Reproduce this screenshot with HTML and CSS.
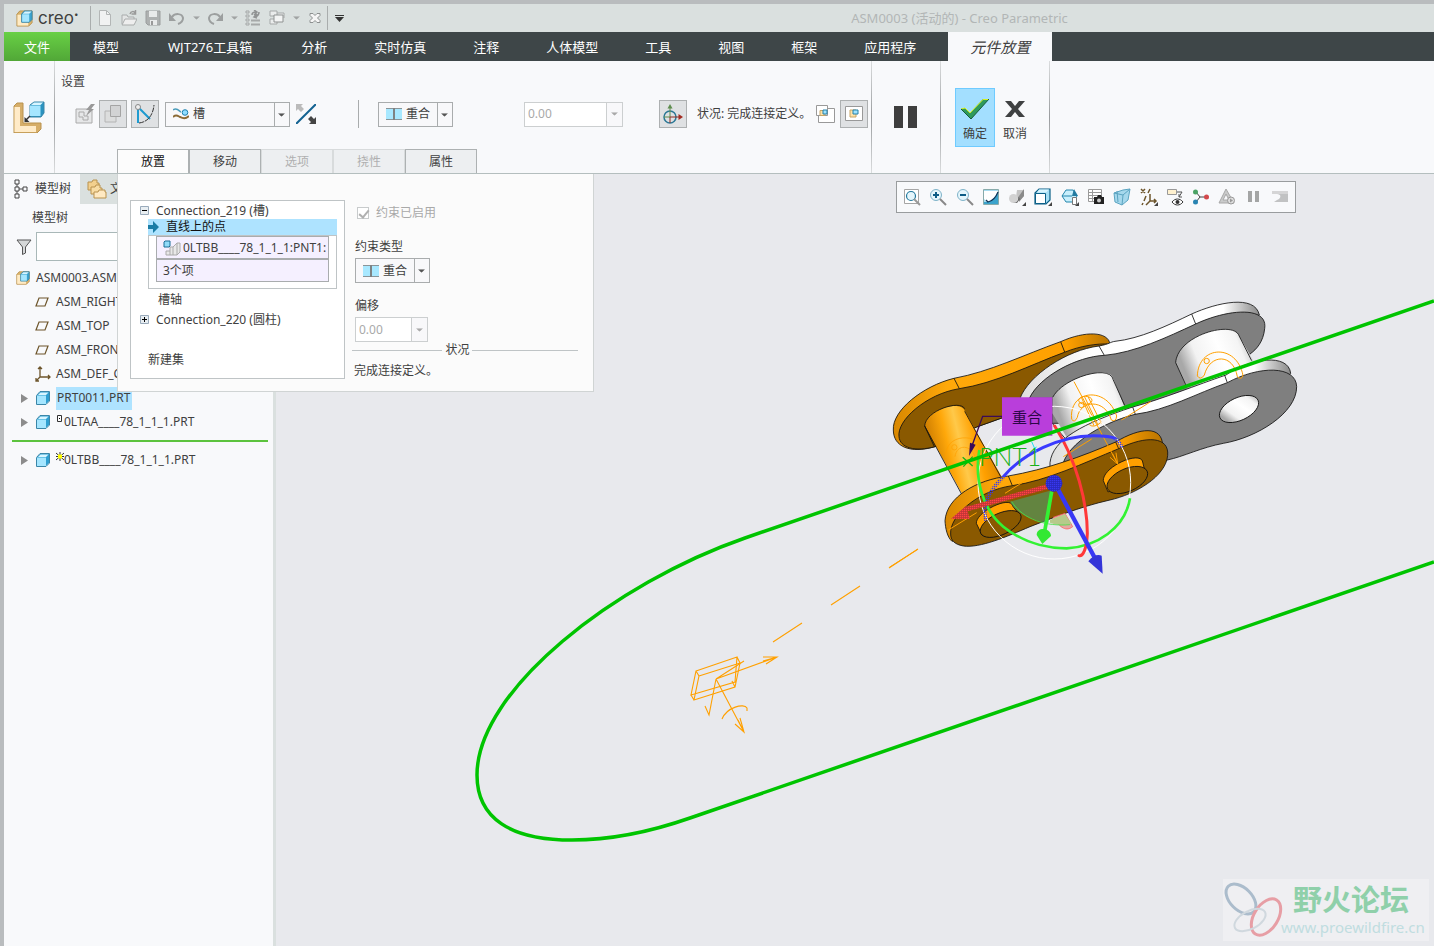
FILE: index.html
```html
<!DOCTYPE html>
<html lang="zh-CN">

<head>
    <meta charset="UTF-8">
    <meta name="viewport" content="width=device-width, initial-scale=1.0">
    <title>ASM0003 (活动的) - Creo Parametric</title>
    <link rel="stylesheet" href="styles.css">
</head>

<body>

    <!-- shared icons -->
    <svg class="defs" aria-hidden="true">
        <symbol id="caret" viewBox="0 0 8 4"><path d="M0 0h8L4 4z" fill="currentColor"/></symbol>
        <symbol id="part" viewBox="0 0 14 14">
            <path d="M1 4l3-3h9v9l-3 3H1z" fill="#2f9fd0"/>
            <path d="M1 4.500h9V13H1z" fill="#a5e6ff"/>
            <path d="M2 4l2.500-2.500h8L10 4z" fill="#d8f5ff"/>
            <path d="M.5 4.500L4 .5h9.500v9.500l-3.500 3.500H.5z" fill="none" stroke="#3a86a8"/>
        </symbol>
        <symbol id="asm" viewBox="0 0 18 18">
            <path d="M1 4.500L4 1h13v12.500L13.500 17H1z" fill="#d9b36c" stroke="#b9924e"/>
            <path d="M1.500 5h11.500v11.500H1.500z" fill="#ffebc4"/>
            <path d="M6 4l3-3h8v9l-3 3H6z" fill="#3aa3cf" stroke="#3a86a8"/>
            <path d="M6.500 4.500H14V12.500H6.500z" fill="#a5e6ff"/>
            <path d="M7 4l2.500-2.500h7L14 4z" fill="#d8f5ff"/>
        </symbol>
        <symbol id="plane" viewBox="0 0 14 10"><path d="M4 1h9l-3 8H1z" fill="none" stroke="#6d552b" stroke-width="1.200"/></symbol>
        <symbol id="arrow" viewBox="0 0 7 9"><path d="M0 0l7 4.500L0 9z" fill="#8c8c8c"/></symbol>
        <symbol id="coincident" viewBox="0 0 16 12">
            <path d="M0 0h16v12H0z" fill="#a8e8ff"/>
            <path d="M0 .5h16M0 11.500h16" stroke="#8a9498"/>
            <path d="M8 0v12" stroke="#7e8283" stroke-width="2"/>
        </symbol>
    </svg>

    <header class="titlebar">
        <svg class="logo-icon" viewBox="0 0 18 18"><use href="#asm"/></svg>
        <span class="logo">creo<sup>•</sup></span>
        <div class="quick">
            <button aria-label="新建"><svg viewBox="0 0 16 16"><path d="M2.500.5h7l4 4v11h-11z" fill="#f1f2f2" stroke="#b3b6b6"/><path d="M9.500.5v4h4" fill="none" stroke="#b3b6b6"/></svg></button>
            <button aria-label="打开"><svg viewBox="0 0 16 16"><path d="M1 14V5h5l1 2h6v2" fill="#e3e5e5" stroke="#a9acac"/><path d="M1 15l3-6h12l-3 6z" fill="#eee" stroke="#a9acac"/><path d="M9 4c1-3 4-3 5-1M14.500 0v4h-4" fill="none" stroke="#999" stroke-width="1.500"/></svg></button>
            <button aria-label="保存"><svg viewBox="0 0 16 16"><path d="M1 1h14v14H3l-2-2z" fill="#aeb1b1" stroke="#9b9e9e"/><path d="M4 1h8v6H4zM5 10h7v5H5z" fill="#e8eaea"/><path d="M6 11h2v4H6z" fill="#999"/></svg></button>
            <button aria-label="撤消"><svg viewBox="0 0 16 16"><path d="M3 7c3-4 10-4 11 1 0 3-2 5-5 6" fill="none" stroke="#9c9f9f" stroke-width="2"/><path d="M0 3v8h7z" fill="#9c9f9f"/></svg></button>
            <button class="drop" aria-label="撤消列表"><svg viewBox="0 0 8 4"><use href="#caret"/></svg></button>
            <button aria-label="重做"><svg viewBox="0 0 16 16"><path d="M13 7C10 3 3 3 2 8c0 3 2 5 5 6" fill="none" stroke="#9c9f9f" stroke-width="2"/><path d="M16 3v8H9z" fill="#9c9f9f"/></svg></button>
            <button class="drop" aria-label="重做列表"><svg viewBox="0 0 8 4"><use href="#caret"/></svg></button>
            <button aria-label="重新生成"><svg viewBox="0 0 16 16"><path d="M1 1h3v2H1zM1 5h3v2H1zM1 9h3v2H1zM1 13h3v2H1z" fill="none" stroke="#a5a8a8"/><path d="M6 10.500h9M6 14.500h9" stroke="#a5a8a8" stroke-width="2"/><path d="M7 5c0-3 3-3 4-3M14 2c0 4-2 4-4 5M9 0l3 2-3 3M12 4l-3 3 3 1" fill="none" stroke="#909393" stroke-width="1.500"/></svg></button>
            <button aria-label="窗口"><svg viewBox="0 0 16 16"><path d="M1 1h7v5H1zM8 3h7v5M1 9h7v5H1z" fill="#eaecec" stroke="#a5a8a8"/><path d="M5 5h9v7H5z" fill="#f3f4f4" stroke="#8f9292"/></svg></button>
            <button class="drop" aria-label="窗口列表"><svg viewBox="0 0 8 4"><use href="#caret"/></svg></button>
            <button aria-label="关闭"><svg viewBox="0 0 16 16"><path d="M3 3.500h3l2 2 2-2h3v2L10.500 8l2.500 2.500v2h-3l-2-2-2 2H3v-2L5.500 8 3 5.500z" fill="#f6f6f6" stroke="#8d9090"/></svg></button>
        </div>
        <button class="customize" aria-label="自定义快速访问工具栏"><svg viewBox="0 0 9 7"><path d="M0 .5h9" stroke="#333"/><path d="M0 2h9L4.500 7z" fill="#333"/></svg></button>
        <h1>ASM0003 (活动的) - Creo Parametric</h1>
    </header>

    <nav class="menu">
        <button class="file">文件</button>
        <button>模型</button>
        <button class="toolbox">WJT276工具箱</button>
        <button>分析</button>
        <button>实时仿真</button>
        <button>注释</button>
        <button>人体模型</button>
        <button>工具</button>
        <button>视图</button>
        <button>框架</button>
        <button>应用程序</button>
        <button class="current">元件放置</button>
    </nav>

    <section class="ribbon">
        <div class="component">
            <svg viewBox="0 0 32 32">
                <path d="M1 5l3-3h6v20h18v6l-4 4H1z" fill="#d6ae69" stroke="#b9924e"/>
                <path d="M1.500 6H7v19h16v6H1.500z" fill="#ffebc8"/>
                <path d="M17 4l4-3h10v11l-3 4H17z" fill="#2b93c0" stroke="#3a86a8"/>
                <path d="M17 4.500h10.500V15H17z" fill="#a5e6ff"/><path d="M18 4l3-2.500h9L27.500 4z" fill="#d8f5ff"/>
                <path d="M17 15l-4 4" stroke="#333" stroke-width="1.500"/><path d="M11.500 16v5h5z" fill="#333"/>
            </svg>
        </div>

        <div class="settings">
            <span class="group-title">设置</span>
            <div class="controls">
                <button class="tool" aria-label="自动放置"><svg viewBox="0 0 20 20"><path d="M1 5h16v14H1z" fill="#e6e7e8" stroke="#aaa"/><path d="M4 8h5v4h4v4H8v-3H4z" fill="none" stroke="#aaa"/><path d="M16 0h4l-4 5h3l-8 7 3-6h-3z" fill="#999"/></svg></button>
                <button class="tool on" aria-label="界面放置"><svg viewBox="0 0 20 20"><path d="M2 7h11v11H2z" fill="#dcdddd" stroke="#b4b4b4"/><path d="M7.500 1.500h10v11h-10z" fill="#d2d3d4" stroke="#a4a4a4"/></svg></button>
                <button class="tool on gap" aria-label="手动放置"><svg viewBox="0 0 20 20"><path d="M3 4v15M3 3l12 12" stroke="#1e9bd0" stroke-width="2"/><path d="M4 19c9-1 14-8 15-18" fill="none" stroke="#333" stroke-dasharray="5 1"/><circle cx="3" cy="3" r="2.500" fill="#eee" stroke="#888"/></svg></button>
                <div class="combo slot">
                    <svg class="combo-icon" viewBox="0 0 16 12"><path d="M0 2c4-3 6 1 8 2" fill="none" stroke="#4b9cbb" stroke-width="1.500"/><path d="M0 9c3-3 5-1 7 0s5 3 9-1" fill="none" stroke="#8b6a35" stroke-width="2"/><circle cx="12" cy="4.500" r="2.800" fill="#8fdcff" stroke="#1b7fae"/></svg>
                    <select aria-label="连接类型"><option>槽</option><option>刚性</option><option>销</option><option>圆柱</option></select>
                    <svg class="caret" viewBox="0 0 8 4"><use href="#caret"/></svg>
                </div>
                <button class="flip" aria-label="反向"><svg viewBox="0 0 20 20"><path d="M0 20L20 0" stroke="#146291" stroke-width="2"/><path d="M0 0h7L5 2l3 3-3 3-3-3-2 2z" fill="#bbb"/><path d="M20 20h-7l2-2-3-3 3-3 3 3 2-2z" fill="#444"/></svg></button>
                <div class="combo constraint ribbon-constraint">
                    <svg class="combo-icon" viewBox="0 0 16 12"><use href="#coincident"/></svg>
                    <select aria-label="约束类型"><option>重合</option><option>距离</option><option>平行</option></select>
                    <svg class="caret" viewBox="0 0 8 4"><use href="#caret"/></svg>
                </div>
                <div class="offset ribbon-offset">
                    <input type="text" value="0.00" aria-label="偏移" disabled>
                    <button aria-label="偏移列表" disabled><svg viewBox="0 0 8 4"><use href="#caret"/></svg></button>
                </div>
                <button class="tool on" aria-label="3D 拖动器"><svg viewBox="0 0 20 20"><circle cx="7" cy="13" r="6" fill="none" stroke="#2b7896" stroke-width="1.500"/><path d="M7 4v9M1 13h6" stroke="#5d8d4e"/><path d="M7 13v6M7 13h10" stroke="#8d2c22"/><path d="M4.500 4.500L7 0l2.500 4.500z" fill="#5d8d4e"/><path d="M15.500 10l4.500 3-4.500 3z" fill="#a22b21"/></svg></button>
                <span class="state">状况: 完成连接定义。</span>
                <button class="tool" aria-label="单独窗口"><svg viewBox="0 0 20 20"><path d="M2.500 4.500h16v14h-16z" fill="#fff" stroke="#999"/><path d="M.5 1.500h11v10H.5z" fill="#fff" stroke="#999"/><path d="M4 6.500h5v5H4z" fill="#ffe2a8" stroke="#c8a564"/><path d="M7 6h4v4H7z" fill="#9fe3ff" stroke="#2781a8"/></svg></button>
                <button class="tool on" aria-label="主窗口"><svg viewBox="0 0 20 20"><path d="M1.500 2.500h17v14h-17z" fill="#fff" stroke="#999"/><path d="M6 6h6v7H6z" fill="#ffe2a8" stroke="#c8a564"/><path d="M9 6h5v4H9z" fill="#9fe3ff" stroke="#2781a8"/></svg></button>
            </div>
            <div class="tabs">
                <button class="open">放置</button>
                <button>移动</button>
                <button disabled>选项</button>
                <button disabled>挠性</button>
                <button>属性</button>
            </div>
        </div>

        <div class="pause">
            <button aria-label="暂停"><svg viewBox="0 0 24 22"><path d="M0 0h9v22H0zM14 0h9v22h-9z" fill="#3e3e3e"/></svg></button>
        </div>
        <div class="finish">
            <button class="ok"><svg viewBox="0 0 28 20"><path d="M0 10l4-1 5 5L22 0h6L10 20z" fill="#2f9a5c"/><path d="M0 10l4-1 5 5L22 .5h6" fill="none" stroke="#d6f01a"/><path d="M28 0L10 20 0 10" fill="none" stroke="#175c3a"/></svg>确定</button>
            <button><svg viewBox="0 0 28 20"><path d="M4 2h6l4 5 4-5h6l-7 8 7 8h-6l-4-5-4 5H4l7-8z" fill="#3f4142"/></svg>取消</button>
        </div>
    </section>

    <main class="workspace">
        <aside class="sidebar">
            <div class="side-tabs">
                <button class="current"><svg viewBox="0 0 14 20"><path d="M1 1h4v4H1zM1 8h4v4H1zM1 15h4v4H1zM9 8h4v4H9zM3 5v3M3 12v3M5 10h4" fill="none" stroke="#444"/></svg>模型树</button>
                <button class="folders"><svg viewBox="0 0 20 20"><path d="M1 3h4l1-2h4v3h2v7H1z" fill="#f3d08e" stroke="#b9924e"/><path d="M4 8h4l1-2h4v3h2v6H4z" fill="#f8dca4" stroke="#b9924e"/><path d="M7 13h4l1-2h6v2h1v6H7z" fill="#ffe9c2" stroke="#b9924e"/></svg>文件夹浏览器</button>
            </div>
            <h2>模型树</h2>
            <div class="filter">
                <svg viewBox="0 0 16 16"><path d="M1 1h14L9.500 8v6L6.500 15.500V8z" fill="#d5d7d8" stroke="#555"/></svg>
                <input type="text" aria-label="筛选">
            </div>
            <ul class="tree">
                <li class="root"><svg class="ic" viewBox="0 0 18 18"><use href="#asm"/></svg>ASM0003.ASM</li>
                <li class="datum"><svg class="flat" viewBox="0 0 14 10"><use href="#plane"/></svg>ASM_RIGHT</li>
                <li class="datum"><svg class="flat" viewBox="0 0 14 10"><use href="#plane"/></svg>ASM_TOP</li>
                <li class="datum"><svg class="flat" viewBox="0 0 14 10"><use href="#plane"/></svg>ASM_FRONT</li>
                <li class="datum"><svg class="ic" viewBox="0 0 16 16"><path d="M5 1v10h10M5 11l-4 4M3 3l2-2 2 2M13 9l2 2-2 2M1 12v3h3" fill="none" stroke="#6d552b" stroke-width="1.300"/></svg>ASM_DEF_CSYS</li>
                <li><svg class="exp" viewBox="0 0 7 9"><use href="#arrow"/></svg><svg class="ic" viewBox="0 0 14 14"><use href="#part"/></svg><span class="picked">PRT0011.PRT</span></li>
                <li><svg class="exp" viewBox="0 0 7 9"><use href="#arrow"/></svg><svg class="ic" viewBox="0 0 14 14"><use href="#part"/></svg><svg class="mark" viewBox="0 0 8 16"><path d="M1.500 1.500h4v6h-4z" fill="#fff" stroke="#333"/><path d="M3 4h1v1H3z"/></svg>0LTAA____78_1_1_1.PRT</li>
                <li class="insert" aria-label="插入点"></li>
                <li><svg class="exp" viewBox="0 0 7 9"><use href="#arrow"/></svg><svg class="ic" viewBox="0 0 14 14"><use href="#part"/></svg><svg class="mark" viewBox="0 0 8 16"><path d="M0 1l8 7M8 1L0 8M4 0v9M0 4.500h8" stroke="#333"/><path d="M2 2.500h4v4H2z" fill="#ff0"/></svg>0LTBB____78_1_1_1.PRT</li>
            </ul>
        </aside>

        <div class="viewport">
            <svg class="scene" viewBox="276 174 1158 772" preserveAspectRatio="xMinYMin slice">
                <defs>
                    <linearGradient id="pin" x1="0" y1="0.300" x2="1" y2="0">
                        <stop offset="0" stop-color="#c87800"/><stop offset=".25" stop-color="#ffa80a"/>
                        <stop offset=".4" stop-color="#ffc94a"/><stop offset=".6" stop-color="#ffa000"/><stop offset="1" stop-color="#b87000"/>
                    </linearGradient>
                    <linearGradient id="roller" x1="0" y1=".3" x2="1" y2="0">
                        <stop offset="0" stop-color="#a8a8a8"/><stop offset=".2" stop-color="#f2f2f2"/>
                        <stop offset=".5" stop-color="#fff"/><stop offset=".75" stop-color="#f4f4f4"/><stop offset="1" stop-color="#a0a0a0"/>
                    </linearGradient>
                    <linearGradient id="rim"><stop offset="0" stop-color="#ddd"/><stop offset=".3" stop-color="#fff"/><stop offset=".85" stop-color="#fff"/><stop offset="1" stop-color="#888"/></linearGradient>
                    <linearGradient id="orange"><stop offset="0" stop-color="#d88700"/><stop offset=".25" stop-color="#ffa90a"/><stop offset=".8" stop-color="#ffa000"/><stop offset="1" stop-color="#b87400"/></linearGradient>
                    <pattern id="blue-dots" width="6" height="6" patternUnits="userSpaceOnUse"><path d="M0 0h4v4H0z" fill="#3838f0"/></pattern>
                    <pattern id="red-dots" width="6" height="6" patternUnits="userSpaceOnUse"><path d="M0 0h6v6H0z" fill="#b33"/><path d="M0 0h4v4H0z" fill="#ff4444"/></pattern>
                </defs>

                <!-- chain link assembly, drawn at 3x -->
                <g transform="translate(880 290) scale(.33333)" stroke="#111" stroke-width="2.500" fill="none">
                    <!-- rear outer plate -->
                    <path d="M40 420C36 362 128 288 222 265C330 245 430 195 542 155C616 122 684 124 690 162L600 300L290 411L165 470C90 492 40 470 40 420z" fill="url(#orange)"/>
                    <path d="M57 440C50 392 138 312 238 296C345 280 450 225 553 187C600 168 650 160 690 162L600 300L290 411L165 470C105 486 60 474 57 440z" fill="#8a5900"/>
                    <path d="M222 265l16 31M542 155l12 31"/>
                    <!-- pin -->
                    <path d="M134 408C136 362 240 328 254 362L366 562L262 640z" fill="url(#pin)" stroke="none"/>
                    <path d="M163 470L134 408C136 362 240 328 254 356M134 408L250 622M254 364L362 560"/>

                    <!-- rear inner plate -->
                    <path d="M420 325C446 256 560 180 657 168C690 162 690 156 705 154C780 146 860 108 935 72C1010 38 1125 12 1138 75L1100 110L520 330z" fill="url(#rim)"/>
                    <path d="M448 325C480 258 590 200 673 196C765 188 860 142 947 102C1040 58 1165 46 1154 116C1150 155 1130 178 1110 192L1040 290L765 372L560 400L516 400V325z" fill="#7f7f7f"/>
                    <path d="M657 168l16 28M935 72l12 30"/>
                    <!-- rollers -->
                    <path d="M518 322C550 262 690 222 700 266L745 380L565 450L517 370z" fill="url(#roller)" stroke="none"/>
                    <path d="M518 322C550 262 690 222 699 268M699 268L734 346M517 400L556 446"/>
                    <path d="M887 218C892 135 1060 90 1077 137L1122 215L1040 290L920 295z" fill="url(#roller)" stroke="none"/>
                    <path d="M918 286L887 218C892 135 1060 90 1077 137M1077 137L1115 212"/>
                    <!-- front inner plate -->
                    <path d="M510 518C518 448 610 400 758 351C850 326 950 285 1038 255C1110 205 1225 188 1232 250L1200 290L700 560H510z" fill="url(#rim)"/>
                    <path d="M545 545C545 470 660 400 765 373C860 361 950 310 1042 278C1138 226 1248 226 1250 290C1250 370 1130 443 1030 460C965 472 910 500 862 510L700 560z" fill="#7f7f7f"/>
                    <path d="M758 351l8 22M1034 256l8 22"/>
                    <ellipse cx="1077" cy="357" rx="63" ry="34" transform="rotate(-25 1077 357)" fill="url(#roller)"/>

                    <!-- front outer plate -->
                    <path d="M195 692C200 620 290 570 385 558C500 538 605 500 707 456C780 412 846 406 848 466L400 690L216 754C202 742 196 715 195 692z" fill="url(#orange)"/>
                    <path d="M212 732C208 680 290 602 397 587C500 572 610 520 716 476C800 435 868 440 863 496C858 560 765 613 690 630C600 650 510 687 450 710C380 740 300 775 250 768C222 763 212 750 212 732z" fill="#8a5900"/>
                    <path d="M385 558l12 29M707 456l9 20"/>
                    <path d="M670 572C668 530 782 480 788 516L795 545L684 606z" fill="#ffa000"/>
                    <ellipse cx="742" cy="570" rx="65" ry="34" transform="rotate(-24 742 570)" fill="#8a5900"/>
                    <path d="M289 700C288 665 392 615 398 648L415 670L306 735z" fill="#ffa000"/>
                    <ellipse cx="362" cy="702" rx="66" ry="32" transform="rotate(-25 362 702)" fill="#8a5900"/>

                    <!-- section quadrant -->
                    <path d="M390 635L518 600L505 700C450 690 410 670 390 635z" fill="#4f9b63" opacity=".65" stroke="none"/>
                    <path d="M520 682L555 670L578 710C560 725 540 715 520 682z" fill="#e6a8a2" stroke="#ff6060"/>
                    <path d="M510 690L555 672L575 702C550 707 530 706 510 698z" fill="#b6ca8a" stroke="none"/>
                    <path d="M395 635C430 690 500 710 570 704" stroke="#49e049"/>

                    <!-- datum axis and servo symbols -->
                    <g stroke="#ffa000" stroke-width="3">
                        <path d="M28 832l85-54M205 720l85-52M375 610l85-53M550 500l85-53M725 390l87-55"/>
                        <path d="M582 275L713 522M690 502l23 20-5-34M713 522l-15-30M604 322l38 85M624 320l40 80M614 321l40 84M628 404Q642 416 664 396"/>
                        <path d="M575 388C565 300 680 285 710 378Q708 398 694 390C675 325 600 330 592 382Q584 400 575 388z"/>
                        <ellipse cx="616" cy="331" rx="20" ry="12"/><circle cx="604" cy="345" r="8"/>
                        <path d="M952 258C955 165 1070 160 1089 256Q1084 272 1072 260C1060 190 990 190 973 255Q962 272 952 258z"/>
                        <circle cx="980" cy="213" r="8"/>
                        <g opacity=".7"><path d="M198 505C190 425 300 430 315 480M225 500C230 460 275 465 285 500"/><circle cx="223" cy="472" r="8"/></g>
                    </g>

                    <!-- 3D dragger -->
                    <circle cx="523" cy="578" r="229" stroke="#fff" stroke-width="3"/>
                    <path d="M298 480C282 570 310 660 370 710C430 758 500 775 560 775C650 770 735 715 750 625" stroke="#33f233" stroke-width="8"/>
                    <path d="M524 408C590 510 622 640 622 730C620 780 608 800 597 797" stroke="#ff3838" stroke-width="9" stroke-linecap="round"/>
                    <path d="M370 560C430 490 540 437 640 437C670 437 695 439 707 446" stroke="#3a3aff" stroke-width="9"/>
                    <path d="M318 692C305 650 325 605 370 560M707 446C715 452 722 460 726 474" stroke="url(#blue-dots)" stroke-width="11"/>
                    <path d="M500 590L262 657" stroke="url(#red-dots)" stroke-width="14"/>
                    <path d="M213 686l46-39 10 40z" fill="url(#red-dots)" stroke="none"/>
                    <path d="M515 605L493 730" stroke="#33f233" stroke-width="11"/>
                    <path d="M470 735C470 710 512 712 513 738L487 762z" fill="#33e833" stroke="none"/>
                    <path d="M535 600L645 805" stroke="#3838f5" stroke-width="13"/>
                    <path d="M625 814C638 796 654 792 665 797L668 851z" fill="#3434d8" stroke="none"/>
                    <circle cx="522" cy="580" r="25" fill="#2727b8" stroke="none"/>
                    <circle cx="522" cy="580" r="25" fill="url(#blue-dots)" stroke="none"/>
                    <path d="M455 455l12 27M470 484l-9-8 9-5" stroke="#20e0f0" stroke-width="3"/>

                    <!-- coincident tag -->
                    <path d="M366 379H308L275 470" stroke="#3b0a58" stroke-width="4"/>
                    <path d="M267 498l3-40 17 6z" fill="#3b0a58" stroke="none"/>
                    <path d="M366 322h151v115H366z" fill="#b93edb" stroke="none"/>
                    <path d="M248 502l30 26M278 500l-28 30" stroke="#18b018" stroke-width="4"/>
                </g>

                <text class="tag" x="1012" y="423">重合</text>
                <text class="point" x="979" y="466">PNT1</text>

                <!-- slot curve -->
                <path d="M1434 301L745 538C615 583 477 690 477 775C477 818 510 840 572 840C610 840 650 832 690 818L1434 562" fill="none" stroke="#00c400" stroke-width="3.500"/>

                <g fill="none" stroke="#ffa000" stroke-width="1.100">
                    <path d="M889 568l29-19M831 605l29-19M773 642l29-19"/>
                    <path d="M696 671l41-14-2 25-44 13zM699 676l41-13-5 24-41 13zM696 671l3 5M737 657l3 6M732 681l3 6M691 695l3 5"/>
                    <path d="M716 679L777 657M763 657h14l-11 7M763 661l14-4M716 679l28-18M716 679l-7 36M705 706l4 9 2-10M716 679l28 53M735 724l9 8-4-14M744 732l-6-12"/>
                    <path d="M722 719C727 707 744 703 747 708v3"/>
                </g>
            </svg>

            <div class="view-tools">
                <button aria-label="重新调整"><svg viewBox="0 0 18 18"><path d="M1.500 1.500h14v14h-14z" fill="#fff" stroke="#a5a5a5"/><circle cx="8" cy="8" r="4.500" fill="#e5f6fc" stroke="#21789d" stroke-width="1.200"/><path d="M11 11l6 6" stroke="#999" stroke-width="2"/></svg></button>
                <button aria-label="放大"><svg viewBox="0 0 18 18"><circle cx="7" cy="7" r="5.500" fill="#e5f6fc" stroke="#7fb3c9"/><path d="M4 7h6M7 4v6" stroke="#0d5c86" stroke-width="2"/><path d="M11 11l6 6" stroke="#888" stroke-width="2"/></svg></button>
                <button aria-label="缩小"><svg viewBox="0 0 18 18"><circle cx="7" cy="7" r="5.500" fill="#e5f6fc" stroke="#7fb3c9"/><path d="M4 7h6" stroke="#0d5c86" stroke-width="2"/><path d="M11 11l6 6" stroke="#888" stroke-width="2"/></svg></button>
                <button aria-label="重画"><svg viewBox="0 0 18 18"><path d="M1.500 1.500h15v15h-15z" fill="#a8dcf0" stroke="#8aa"/><path d="M2 3h14C14 8 10 12 6 14l-4-3z" fill="#fff"/><path d="M2 14h4c5-2 9-6 10-10v12H2z" fill="#3ba3cc"/><path d="M16 4C14 9 11 13 6 14l-2-2" fill="none" stroke="#135" stroke-width="1.200"/></svg></button>
                <button aria-label="渲染选项"><svg viewBox="0 0 18 18"><path d="M9 2h7v6l-4 4-4-3z" fill="#c4c4c4"/><path d="M16 1v7l-5 6V8z" fill="#8a8a8a"/><circle cx="5.500" cy="10.500" r="4.500" fill="#d2d2d2"/><path d="M5 15c4 0 6-3 5-7l2 3-3 4z" fill="#666"/><path d="M18 14v4h-4z" fill="#444"/></svg></button>
                <button aria-label="显示样式"><svg viewBox="0 0 18 18"><path d="M1 5l4-4h11v11l-4 4H1z" fill="#a5dff5" stroke="#0b5f87" stroke-width="1.200"/><path d="M1.500 5.500h10v10h-10z" fill="#fff" stroke="#0b5f87"/><path d="M3 4.500l2-3h10l-3 3z" fill="#d8f5ff"/><path d="M18 14v4h-4z" fill="#444"/></svg></button>
                <button aria-label="已保存方向"><svg viewBox="0 0 18 18"><path d="M1 8l4-6h7l4 6-4 6H5zM1 8h10" fill="#c8effc" stroke="#2486ad"/><path d="M13 1l4 7h-6z" fill="#227ba1"/><path d="M11.500 9.500h4v7h-4z" fill="#fff" stroke="#777"/><path d="M18 14v4h-4z" fill="#444"/></svg></button>
                <button aria-label="视图管理器"><svg viewBox="0 0 18 18"><path d="M1.500 1.500h13v12h-13zM1 4.500h13M1 7.500h13M1 10.500h13M5.500 1v13" fill="#fff" stroke="#999"/><path d="M7 9h3l1-2h3l1 2h2v7H7z" fill="#222"/><circle cx="12" cy="12.500" r="2" fill="#ccc"/></svg></button>
                <button aria-label="透视图"><svg viewBox="0 0 18 18"><path d="M1 5l9-3 7-1-2 11-6 5-7-3z" fill="#a5d8ec" stroke="#5ba4c1"/><path d="M1 5l9 2 7-6M10 7l-1 10M4 3l1 11" fill="none" stroke="#5ba4c1"/></svg></button>
                <button aria-label="基准显示过滤器"><svg viewBox="0 0 18 18"><path d="M1 1l4 4M5 1L1 5M10 1L8 5M6 8l-2 5M3 15l-1 2M10 6v7h6M10 13l-4 4M14 11l2 2-2 2" fill="none" stroke="#6d552b" stroke-width="1.500"/><path d="M18 14v4h-4z" fill="#444"/></svg></button>
                <button aria-label="注释显示"><svg viewBox="0 0 18 18"><path d="M1.500 1.500h9v5h-9z" fill="#fff1cf" stroke="#999"/><path d="M11 4h5l-3 5M13 6v3h3" fill="none" stroke="#555"/><path d="M6 14c3-4 8-4 11 0-3 4-8 4-11 0z" fill="#fff" stroke="#333"/><circle cx="11.500" cy="14" r="2" fill="#333"/></svg></button>
                <button aria-label="旋转中心"><svg viewBox="0 0 18 18"><path d="M4 4l4 5-4 5M8 9h6" fill="none" stroke="#444"/><circle cx="3.500" cy="4" r="2.500" fill="#4ba365"/><circle cx="3.500" cy="14" r="2.500" fill="#2984b2"/><circle cx="14.500" cy="9" r="2.500" fill="#d3494c"/></svg></button>
                <button aria-label="仿真" disabled><svg viewBox="0 0 18 18"><path d="M8 1l8 14H1zM8 6l-3 6h6z" fill="#c9caca" stroke="#a8a8a8" fill-rule="evenodd"/><circle cx="13" cy="12.500" r="3.500" fill="#ddd" stroke="#999"/><path d="M12 10.500v4l3-2z" fill="#999"/></svg></button>
                <button aria-label="暂停仿真" disabled><svg viewBox="0 0 18 18"><path d="M3 3h4v11H3zM10 3h4v11h-4z" fill="#a4a5a5"/></svg></button>
                <button aria-label="仿真结果" disabled><svg viewBox="0 0 18 18"><path d="M1 3h16v11H3l3-2c5-2 4-6 0-6H1z" fill="#c1c2c3"/><path d="M1 3h16v3H1z" fill="#d5d5d6"/></svg></button>
            </div>

            <div class="watermark">
                <svg viewBox="0 0 60 60">
                    <g fill="none" opacity=".6">
                        <ellipse cx="18" cy="20" rx="18" ry="11" transform="rotate(45 18 20)" stroke="#7f9bb3" stroke-width="3"/>
                        <ellipse cx="43" cy="38" rx="12" ry="20" transform="rotate(32 43 38)" stroke="#e26a73" stroke-width="3"/>
                        <ellipse cx="27" cy="41" rx="17" ry="9" transform="rotate(-28 27 41)" stroke="#bcc9d2" stroke-width="2"/>
                    </g>
                </svg>
                <div>
                    <strong>野火论坛</strong>
                    <span>www.proewildfire.cn</span>
                </div>
            </div>
        </div>

        <section class="placement">
            <div class="sets">
                <p class="set"><svg viewBox="0 0 9 9"><path d="M.5.5h8v8h-8z" fill="#e8eef2" stroke="#9ab"/><path d="M2 4.500h5" stroke="#000"/></svg>Connection_219 (槽)</p>
                <p class="active"><svg viewBox="0 0 12 12"><path d="M0 4h5V0l6 6-6 6V8H0z" fill="#1b7da6"/></svg>直线上的点</p>
                <div class="refs">
                    <p><svg viewBox="0 0 18 16"><path d="M3 15v-4h4V7h3l4-4h3v9l-3 3zM7 11v4M10 7v8M14 3v12" fill="#e8e8e8" stroke="#aaa"/><path d="M1 2l1-1h5v5l-1 1H1z" fill="#90dcf8" stroke="#1b6f96"/></svg>0LTBB____78_1_1_1:PNT1:</p>
                    <p>3个项</p>
                </div>
                <p class="axis">槽轴</p>
                <p class="set"><svg viewBox="0 0 9 9"><path d="M.5.5h8v8h-8z" fill="#e8eef2" stroke="#9ab"/><path d="M2 4.500h5M4.500 2v5" stroke="#000"/></svg>Connection_220 (圆柱)</p>
                <p class="new-set">新建集</p>
            </div>
            <div class="options">
                <label class="enabled"><input type="checkbox" checked disabled>约束已启用</label>
                <label for="ctype">约束类型</label>
                <div class="combo constraint">
                    <svg class="combo-icon" viewBox="0 0 16 12"><use href="#coincident"/></svg>
                    <select id="ctype"><option>重合</option><option>距离</option><option>平行</option></select>
                    <svg class="caret" viewBox="0 0 8 4"><use href="#caret"/></svg>
                </div>
                <label for="coffset">偏移</label>
                <div class="offset">
                    <input type="text" id="coffset" value="0.00" disabled>
                    <button aria-label="偏移列表" disabled><svg viewBox="0 0 8 4"><use href="#caret"/></svg></button>
                </div>
                <h3>状况</h3>
                <p>完成连接定义。</p>
            </div>
        </section>
    </main>

</body>

</html>
```

FILE: styles.css
```css
* {
    box-sizing: border-box;
}

html,
body {
    height: 100%;
}

body {
    margin: 0;
    border-top: 4px solid #b9bcbe;
    border-left: 4px solid #b9bcbe;
    display: flex;
    flex-direction: column;
    overflow: hidden;
    background-color: #f8f9fb;
    color: #404040;
    font-family: "Noto Sans", "Noto Sans CJK SC", sans-serif;
    font-size: 12px;
    line-height: 16px;
}

button,
input,
select {
    font: inherit;
    color: inherit;
    margin: 0;
    padding: 0;
    border: none;
    background: none;
}

svg {
    display: block;
    flex: none;
}

h1,
h2,
h3,
p,
ul {
    margin: 0;
    padding: 0;
    font-size: 12px;
    font-weight: normal;
}

.defs {
    position: absolute;
    width: 0;
    height: 0;
}

/* title bar */
.titlebar {
    display: flex;
    align-items: center;
    flex: none;
    height: 28px;
    padding-left: 12px;
    background-color: #dae0df;
}

.logo-icon {
    width: 17px;
    height: 17px;
}

.logo {
    width: 57px;
    padding-left: 5px;
    font-family: Inter, sans-serif;
    font-size: 17px;
}

.logo sup {
    font-size: 8px;
    line-height: 1px;
}

.quick {
    display: flex;
    height: 24px;
    padding-left: 2px;
    border-left: 1px solid #a9adad;
    border-right: 1px solid #a9adad;
}

.quick button {
    display: flex;
    align-items: center;
    justify-content: center;
    width: 24px;
    color: #a0a3a3;
}

.quick svg {
    width: 16px;
    height: 16px;
}

.quick .drop {
    width: 14px;
}

.quick .drop svg {
    width: 7px;
    height: 4px;
}

.customize {
    padding: 0 7px;
}

.customize svg {
    width: 9px;
    height: 7px;
}

.titlebar h1 {
    flex: 1;
    padding-left: 134px;
    text-align: center;
    font-size: 13px;
    color: #b2b6b6;
}

/* menu */
.menu {
    display: flex;
    flex: none;
    gap: 1px;
    height: 29px;
    background-color: #3e4648;
}

.menu button {
    padding: 0 23px;
    font-size: 13px;
    color: #fff;
}

.menu .file {
    padding: 0 20px;
    margin-right: -1px;
    background: linear-gradient(#68d045, #51a737);
}

.menu .toolbox {
    padding: 0 25px;
}

.menu .current {
    margin-left: 8px;
    padding: 0 22px;
    background-color: #f8f9fb;
    color: #404040;
    font-size: 15px;
    font-style: italic;
}

/* ribbon */
.ribbon {
    display: flex;
    flex: none;
    height: 113px;
    border-bottom: 1px solid #b4bebe;
}

.component,
.settings,
.pause,
.finish {
    border-right: 1px solid;
    border-image: linear-gradient(#dcdedf, #999c9e 50%, #dcdedf) 1;
}

.component {
    width: 51px;
    padding: 40px 9px;
}

.component svg {
    width: 32px;
    height: 32px;
}

.settings {
    display: flex;
    flex-direction: column;
    width: 817px;
    padding-top: 13px;
    padding-left: 6px;
}

.controls {
    display: flex;
    align-items: center;
    height: 28px;
    margin: 10px 0 21px 10px;
}

.tool {
    display: flex;
    align-items: center;
    justify-content: center;
    width: 28px;
    height: 28px;
}

.tool svg,
.flip svg {
    width: 20px;
    height: 20px;
}

.tool.on {
    border: 1px solid #adb0b1;
    background-color: #dfe1e3;
}

.tool.gap {
    margin-left: 4px;
}

.combo {
    display: grid;
    align-items: center;
    height: 25px;
    border: 1px solid #a9acad;
    background-color: #f8f8fa;
}

.combo > * {
    grid-row: 1;
    grid-column: 1;
}

.combo select {
    width: 100%;
    height: 23px;
    padding-left: 27px;
    appearance: none;
}

.combo-icon {
    width: 16px;
    height: 12px;
    margin-left: 7px;
}

.combo .caret {
    justify-self: end;
    box-sizing: content-box;
    width: 7px;
    height: 4px;
    padding: 10px 4px 9px 3px;
    border-left: 1px solid #a9acad;
    color: #555;
    pointer-events: none;
}

.slot {
    width: 125px;
    margin-left: 6px;
}

.flip {
    margin: 0 42px 0 6px;
}

.constraint {
    width: 75px;
}

.ribbon-constraint {
    position: relative;
    margin-left: 20px;
}

.ribbon-constraint::before {
    content: "";
    position: absolute;
    left: -21px;
    width: 1px;
    height: 28px;
    background-color: #a9acad;
}

.offset {
    display: flex;
    width: 73px;
    height: 25px;
    border: 1px solid #cccfd0;
    background-color: #fff;
}

.offset input {
    flex: 1;
    min-width: 0;
    padding-left: 3px;
    color: #a9a9a9;
}

.offset button {
    display: flex;
    align-items: center;
    justify-content: center;
    width: 16px;
    border-left: 1px solid #cccfd0;
    background-color: #f8f8fa;
    color: #a9a9a9;
}

.offset svg {
    width: 7px;
    height: 4px;
}

.ribbon-offset {
    width: 99px;
    margin: 0 36px 0 71px;
}

.state {
    flex: 1;
    padding-left: 10px;
    white-space: nowrap;
}

.controls .tool:last-child {
    margin-right: 3px;
}

.tabs {
    display: flex;
    height: 25px;
    margin-left: 56px;
}

.tabs button {
    width: 72px;
    border: 1px solid #adb1b2;
    border-bottom: none;
    background-color: #edeff1;
}

.tabs .open {
    background-color: #fcfcfc;
    color: #111;
}

.tabs button:disabled {
    border-color: #d8dbdc;
    color: #b0b0b0;
}

.pause {
    width: 69px;
    padding: 45px 22px;
}

.pause svg {
    width: 24px;
    height: 22px;
}

.finish {
    display: flex;
    width: 109px;
    padding: 27px 0 26px 14px;
}

.finish button {
    display: flex;
    flex-direction: column;
    align-items: center;
    gap: 7px;
    width: 40px;
    padding-top: 10px;
    border: 1px solid transparent;
}

.finish .ok {
    border-color: #6fcbff;
    background-color: #a3dfff;
}

.finish svg {
    width: 28px;
    height: 20px;
}

/* model tree */
.workspace {
    position: relative;
    display: flex;
    flex: 1;
    min-height: 0;
}

.sidebar {
    flex: none;
    width: 272px;
    border-right: 3px solid #dae0df;
}

.side-tabs {
    display: flex;
    height: 30px;
    background-color: #dae0df;
}

.side-tabs button {
    display: flex;
    align-items: center;
    gap: 7px;
    padding: 0 8px 0 10px;
    white-space: nowrap;
}

.side-tabs .current {
    width: 76px;
    background-color: #f8f9fb;
}

.side-tabs svg {
    width: 14px;
    height: 20px;
}

.side-tabs .folders {
    gap: 3px;
    padding-left: 7px;
}

.side-tabs .folders svg {
    width: 20px;
}

.sidebar h2 {
    padding: 6px 0 6px 28px;
}

.filter {
    display: flex;
    align-items: center;
    gap: 4px;
    padding: 0 5px 0 12px;
}

.filter svg {
    width: 16px;
    height: 16px;
}

.filter input {
    flex: 1;
    min-width: 0;
    height: 29px;
    border: 1px solid #a9b8b8;
    background-color: #fff;
}

.tree {
    padding-top: 5px;
    list-style: none;
}

.tree li {
    display: flex;
    align-items: center;
    height: 24px;
    padding-left: 17px;
    white-space: nowrap;
}

.tree .root {
    padding-left: 12px;
}

.tree .datum {
    padding-left: 31px;
}

.ic,
.flat {
    width: 14px;
    height: 14px;
    margin-right: 6px;
}

.flat {
    height: 10px;
    margin-right: 7px;
}

.datum .ic {
    width: 16px;
    height: 16px;
    margin-right: 5px;
}

.root .ic {
    height: 16px;
}

.exp {
    width: 7px;
    height: 9px;
    margin-right: 8px;
}

.mark {
    width: 8px;
    height: 16px;
}

.picked {
    padding: 3px 2px 4px 1px;
    background-color: #aee3ff;
}

.tree .insert {
    height: 2px;
    margin: 6px 5px 6px 8px;
    background-color: #5cc33e;
}

/* graphics area */
.viewport {
    position: relative;
    flex: 1;
    min-width: 0;
    overflow: hidden;
    background-color: #e8e9ed;
}

.scene {
    width: 100%;
    height: 100%;
}

.tag {
    font-size: 15px;
    fill: #2c0747;
}

.point {
    font-family: Lato, sans-serif;
    font-size: 25px;
    font-weight: 300;
    fill: #18b018;
}

.view-tools {
    position: absolute;
    top: 7px;
    right: 138px;
    display: flex;
    justify-content: space-between;
    width: 400px;
    height: 32px;
    padding: 0 2px;
    border: 1px solid #999c9e;
    background-color: #f8f9fb;
}

.view-tools button {
    display: flex;
    align-items: center;
    justify-content: center;
    width: 26px;
}

.view-tools svg {
    width: 18px;
    height: 18px;
}

.watermark {
    position: absolute;
    right: 5px;
    bottom: 5px;
    display: flex;
    width: 206px;
    height: 62px;
    background-color: rgba(255, 255, 255, 0.3);
}

.watermark svg {
    width: 60px;
    height: 60px;
}

.watermark strong {
    display: block;
    padding: 4px 0 0 10px;
    font-size: 29px;
    line-height: 34px;
    color: #8fd0aa;
}

.watermark span {
    display: block;
    margin-left: -2px;
    font-size: 15px;
    line-height: 20px;
    color: #c0dde0;
}

/* placement panel */
.placement {
    position: absolute;
    top: 0;
    left: 113px;
    display: flex;
    gap: 7px;
    width: 477px;
    height: 218px;
    padding: 26px 15px 12px 12px;
    border: 1px solid #d0d4d4;
    border-top: none;
    background-color: #fbfbfb;
}

.sets {
    flex: none;
    width: 215px;
    padding: 1px 7px 0 17px;
    border: 1px solid #bfc4c6;
    background-color: #fff;
    white-space: nowrap;
}

.sets p {
    display: flex;
    align-items: center;
}

.sets .set {
    gap: 7px;
    height: 17px;
    margin-left: -8px;
}

.set svg {
    width: 9px;
    height: 9px;
}

.sets .active {
    gap: 6px;
    height: 16px;
    background-color: #aee3ff;
    color: #111;
}

.active svg {
    width: 12px;
    height: 12px;
}

.refs {
    height: 54px;
    padding: 0 7px;
    border: 1px solid #bfc4c6;
}

.refs p {
    gap: 2px;
    height: 23px;
    padding-left: 6px;
    border: 1px solid #a9acae;
    background-color: #f5f0ff;
    overflow: hidden;
}

.refs svg {
    width: 18px;
    height: 16px;
}

.sets .axis {
    height: 22px;
    padding-left: 10px;
}

.sets .new-set {
    margin-top: 24px;
}

.options {
    display: flex;
    flex-direction: column;
    align-items: flex-start;
    flex: 1;
}

.options label {
    margin: 0 0 3px 3px;
}

.options .enabled {
    display: flex;
    align-items: center;
    gap: 7px;
    margin: 5px 0 18px 5px;
    color: #a9a9a9;
}

.enabled input {
    width: 12px;
    height: 12px;
    border: 1px solid #c8cbcc;
    background-color: #fff;
    appearance: none;
}

.enabled input:checked::before {
    content: "";
    display: block;
    width: 4px;
    height: 8px;
    margin-left: 3px;
    border: solid #b0b0b0;
    border-width: 0 2px 2px 0;
    transform: rotate(40deg);
}

.options .combo,
.options .offset {
    margin-left: 3px;
}

.options .combo {
    margin-bottom: 15px;
}

.options h3 {
    display: flex;
    align-items: center;
    gap: 3px;
    align-self: stretch;
}

.options h3::before,
.options h3::after {
    content: "";
    flex: 6;
    height: 1px;
    background-color: #bfc4c6;
}

.options h3::after {
    flex: 7;
}

.options p {
    padding: 5px 0 0 2px;
}
```
